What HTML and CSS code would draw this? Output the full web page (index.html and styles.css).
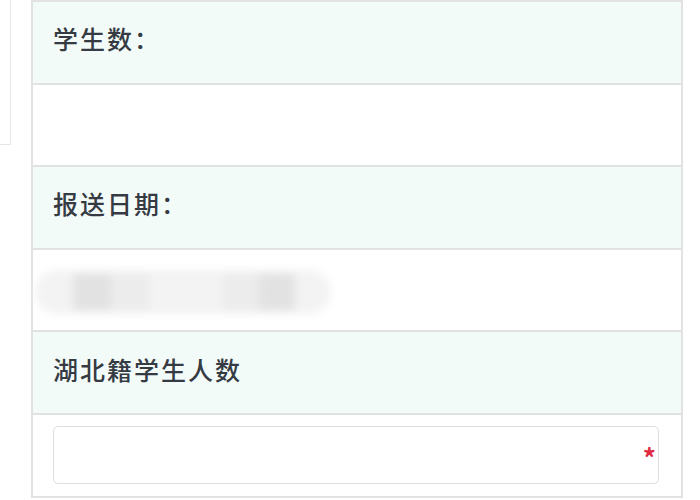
FILE: index.html
```html
<!DOCTYPE html>
<html>
<head>
  <meta charset="utf-8">
  <link rel="stylesheet" href="styles.css">
</head>
<body>
  <div class="page">
    <div class="side"></div>
    <div class="panel">
      <div class="row head">学生数：</div>
      <div class="row"></div>
      <div class="row head">报送日期：</div>
      <div class="row">
        <div class="masked">
          <span class="blob b1"></span>
          <span class="blob b2"></span>
          <span class="blob b3"></span>
          <span class="blob b4"></span>
        </div>
      </div>
      <div class="row head">湖北籍学生人数</div>
      <div class="row field">
        <div class="input">
          <input type="text">
          <span class="required">*</span>
        </div>
      </div>
    </div>
  </div>
</body>
</html>
```

FILE: styles.css
```css
body {
  margin: 0;
  font-family: "Noto Sans CJK SC", "Noto Sans", sans-serif;
  color: #353a43;
  background: #fff;
}
.page {
  display: flex;
  align-items: flex-start;
  gap: 20px;
}
.side {
  width: 10px;
  height: 144px;
  border-right: 1px solid #e6e6e6;
  border-bottom: 1px solid #e6e6e6;
  flex: none;
}
.panel {
  width: 648px;
  border: 2px solid #e2e2e2;
  flex: none;
}
.row {
  height: 80.6px;
  border-bottom: 2px solid #e2e2e2;
  display: flex;
  align-items: center;
  padding-left: 20px;
  font-size: 25px;
  font-weight: 500;
  letter-spacing: 2px;
}
.row.head {
  padding-bottom: 8px;
  height: 72.6px;
}
.row:last-child {
  border-bottom: none;
}
.head {
  background: #f3fbf9;
}
.masked {
  display: flex;
  align-items: center;
  height: 44px;
  width: 296px;
  margin-left: -18px;
  margin-top: 4px;
  background: #f3f3f3;
  border-radius: 22px;
  filter: blur(4px);
}
.blob {
  display: block;
  height: 36px;
  background: #e2e2e2;
}
.b1 { width: 38px; margin-left: 38px; }
.b2 { width: 38px; background: #ececec; }
.b3 { width: 36px; margin-left: 74px; background: #ececec; }
.b4 { width: 36px; background: #e2e2e2; }
.field {
  padding-right: 22px;
}
.input {
  position: relative;
  flex: 1;
  height: 58px;
}
.input input {
  box-sizing: border-box;
  width: 100%;
  height: 100%;
  border: 1px solid #dedede;
  border-radius: 5px;
  outline: none;
  background: #fff;
}
.required {
  position: absolute;
  right: 3px;
  top: 17px;
  color: #e0283f;
  font-size: 26px;
  font-weight: 700;
  line-height: 28px;
  letter-spacing: 0;
}
```
